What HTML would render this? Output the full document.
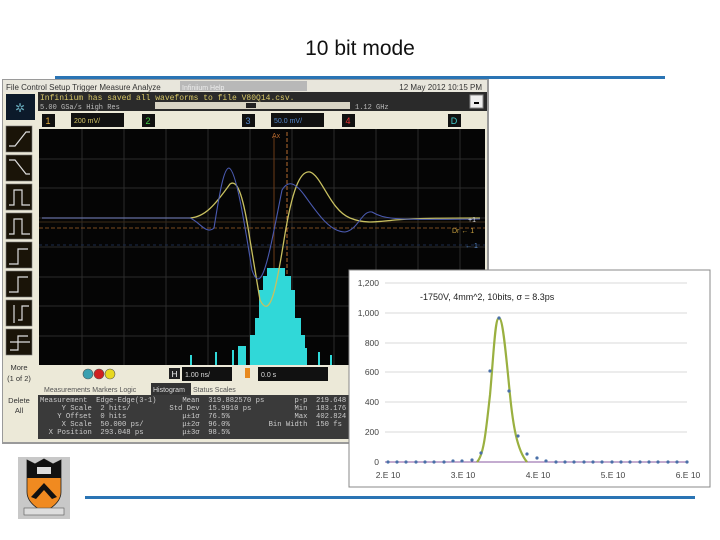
<!DOCTYPE html>
<html><head><meta charset="utf-8"><style>
html,body{margin:0;padding:0;background:#fff;width:720px;height:540px;overflow:hidden}
svg{display:block}
text{font-family:"Liberation Sans",sans-serif}
.m text, text.m{font-family:"Liberation Mono",monospace}
</style></head><body>
<svg width="720" height="540" viewBox="0 0 720 540" xmlns="http://www.w3.org/2000/svg">
<text x="360" y="55" font-size="21" text-anchor="middle" fill="#111">10 bit mode</text>
<rect x="55" y="76" width="610" height="3" fill="#2a74b4"/>
<rect x="85" y="496" width="610" height="3" fill="#2a74b4"/>

<rect x="2" y="79" width="487" height="365" fill="#9a9a9a"/>
<rect x="3" y="80" width="484" height="362" fill="#ece9d8"/>
<rect x="3" y="80" width="484" height="12" fill="#e8e6dc"/>
<text x="6" y="90" font-size="8" fill="#333">File  Control  Setup  Trigger  Measure  Analyze</text>
<rect x="180" y="81" width="127" height="10" fill="#b8b8b8"/>
<text x="182" y="90" font-size="7" fill="#eee">Infiniium Help</text>
<text x="482" y="90" font-size="8" fill="#333" text-anchor="end">12 May 2012 10:15 PM</text>
<rect x="38" y="92" width="449" height="19" fill="#2a2a2a"/>
<text x="40" y="100" class="m" font-size="8" fill="#d8c868">Infiniium has saved all waveforms to file V80Q14.csv.</text>
<text x="40" y="109" class="m" font-size="7" fill="#bbb">5.00 GSa/s  High Res</text>
<rect x="155" y="102" width="195" height="7" fill="#d8d4c4"/>
<rect x="246" y="103" width="10" height="5" fill="#222"/>
<text x="355" y="109" class="m" font-size="7" fill="#bbb">1.12 GHz</text>
<rect x="470" y="95" width="13" height="13" fill="#eee" stroke="#888"/>
<rect x="474" y="102" width="5" height="2" fill="#000"/>
<rect x="6" y="94" width="29" height="26" fill="#0c1a2a"/>
<text x="20" y="112" font-size="12" fill="#6ab" text-anchor="middle">✲</text>
<rect x="38" y="111" width="449" height="18" fill="#ece9d8"/>
<rect x="42" y="114" width="13" height="13" fill="#111"/><text x="48" y="124" font-size="9" fill="#e8b040" text-anchor="middle">1</text>
<rect x="71" y="113" width="53" height="14" fill="#111"/><text x="74" y="123" font-size="7" fill="#d8c868">200 mV/</text>
<rect x="142" y="114" width="13" height="13" fill="#111"/><text x="148" y="124" font-size="9" fill="#4c4" text-anchor="middle">2</text>
<rect x="242" y="114" width="13" height="13" fill="#111"/><text x="248" y="124" font-size="9" fill="#58c" text-anchor="middle">3</text>
<rect x="271" y="113" width="53" height="14" fill="#111"/><text x="274" y="123" font-size="7" fill="#58c">50.0 mV/</text>
<rect x="342" y="114" width="13" height="13" fill="#111"/><text x="348" y="124" font-size="9" fill="#e33" text-anchor="middle">4</text>
<rect x="448" y="114" width="13" height="13" fill="#111"/><text x="454" y="124" font-size="9" fill="#4cc" text-anchor="middle">D</text>
<g fill="#1a1408" stroke="#777" stroke-width="0.6">
<rect x="6" y="126" width="26" height="26"/><rect x="6" y="155" width="26" height="26"/>
<rect x="6" y="184" width="26" height="26"/><rect x="6" y="213" width="26" height="26"/>
<rect x="6" y="242" width="26" height="26"/><rect x="6" y="271" width="26" height="26"/>
<rect x="6" y="300" width="26" height="26"/><rect x="6" y="329" width="26" height="26"/>
</g>
<g fill="none" stroke="#ddd" stroke-width="1.2">
<path d="M9 146 L15 146 L26 132 L30 132"/><path d="M9 160 L15 160 L26 174 L30 174"/>
<path d="M9 205 L14 205 L14 190 L22 190 L22 205 L30 205"/><path d="M9 234 L14 234 L14 219 L22 219 L22 234 L30 234"/>
<path d="M9 264 L18 264 L18 249 L28 249"/><path d="M9 292 L18 292 L18 277 L28 277"/>
<path d="M14 305 L14 323 M18 320 L22 320 L22 306 L29 306"/><path d="M10 350 L18 350 L18 336 L28 336 M10 342 L30 342"/>
</g>
<text x="19" y="370" font-size="7.5" fill="#333" text-anchor="middle">More</text>
<text x="19" y="381" font-size="7.5" fill="#333" text-anchor="middle">(1 of 2)</text>
<text x="19" y="403" font-size="7.5" fill="#333" text-anchor="middle">Delete</text>
<text x="19" y="413" font-size="7.5" fill="#333" text-anchor="middle">All</text>
<rect x="39" y="129" width="446" height="236" fill="#050505"/>
<g stroke="#2c2c2c" stroke-width="1">
<path d="M82 129V365M124 129V365M166 129V365M208 129V365M250 129V365M292 129V365M334 129V365M376 129V365M418 129V365M460 129V365"/>
<path d="M39 159H485M39 188H485M39 218H485M39 247H485M39 277H485M39 306H485M39 336H485"/>
</g>
<path d="M39 228H485" stroke="#7a4a20" stroke-dasharray="4 2"/>
<path d="M39 222H485" stroke="#3a2a18"/>
<path d="M39 245H485" stroke="#1a2a4a" stroke-dasharray="3 3"/>
<path d="M287 132V365" stroke="#b56a30" stroke-dasharray="4 2"/>
<path d="M274 136V365" stroke="#6a3a18"/>
<text x="272" y="138" font-size="7" fill="#b56a30">Ax</text>
<g fill="#30d8d8">
<rect x="259" y="290" width="36" height="75"/><rect x="263" y="276" width="28" height="89"/>
<rect x="267" y="268" width="18" height="97"/><rect x="255" y="318" width="46" height="47"/>
<rect x="250" y="335" width="55" height="30"/><rect x="232" y="350" width="2" height="15"/>
<rect x="215" y="352" width="2" height="13"/><rect x="238" y="346" width="8" height="19"/>
<rect x="305" y="348" width="2" height="17"/><rect x="318" y="352" width="2" height="13"/>
<rect x="190" y="355" width="2" height="10"/><rect x="330" y="355" width="2" height="10"/>
</g>
<path d="M42 218 L190 218 C205 217 215 205 230 184 C238 178 244 200 250 240 L260 300 C270 320 276 290 284 240 C292 190 300 170 310 172 C322 176 330 210 350 218 C365 224 375 222 395 220 C420 218 450 218 480 218" fill="none" stroke="#c8c060" stroke-width="1.3"/>
<path d="M42 218 L190 218 C200 222 206 235 214 228 C220 190 224 168 229 168 C236 170 244 220 252 270 C262 300 270 250 282 190 C288 180 295 182 305 196 C318 214 330 232 345 232 C358 230 362 210 372 212 C385 220 400 220 480 219" fill="none" stroke="#4a5ab0" stroke-width="1.1"/>
<text x="468" y="222" font-size="7" fill="#ddd">+1</text>
<text x="452" y="233" font-size="7" fill="#c8a040">Dr ← 1</text>
<text x="465" y="248" font-size="7" fill="#58c">← 1</text>
<rect x="38" y="365" width="449" height="18" fill="#ece9d8"/>
<circle cx="88" cy="374" r="5" fill="#3aa0b0" stroke="#555" stroke-width=".6"/>
<circle cx="99" cy="374" r="5" fill="#d02020" stroke="#555" stroke-width=".6"/>
<circle cx="110" cy="374" r="5" fill="#e8d820" stroke="#555" stroke-width=".6"/>
<rect x="169" y="368" width="11" height="11" fill="#222"/><text x="174.5" y="377" font-size="8" fill="#fff" text-anchor="middle">H</text>
<rect x="182" y="367" width="50" height="14" fill="#111"/><text x="185" y="377" font-size="7" fill="#ddd">1.00 ns/</text>
<rect x="245" y="368" width="5" height="10" fill="#e88a20"/>
<rect x="258" y="367" width="70" height="14" fill="#111"/><text x="261" y="377" font-size="7" fill="#ddd">0.0 s</text>
<rect x="38" y="383" width="449" height="12" fill="#ece9d8"/>
<text x="44" y="392" font-size="7" fill="#555">Measurements  Markers  Logic</text>
<rect x="151" y="383" width="40" height="12" fill="#333"/><text x="153" y="392" font-size="7" fill="#ddd">Histogram</text>
<text x="193" y="392" font-size="7" fill="#555">Status  Scales</text>
<rect x="38" y="395" width="449" height="44" fill="#3a3a3a"/>
<g class="m" font-size="7.2" fill="#ccc">
<text x="40" y="402" xml:space="preserve">Measurement  Edge-Edge(3-1)      Mean  319.882570 ps       p-p  219.648 ps</text>
<text x="40" y="410" xml:space="preserve">     Y Scale  2 hits/         Std Dev  15.9910 ps          Min  183.176 ps</text>
<text x="40" y="418" xml:space="preserve">    Y Offset  0 hits             μ±1σ  76.5%               Max  402.824 ps</text>
<text x="40" y="426" xml:space="preserve">     X Scale  50.000 ps/         μ±2σ  96.0%         Bin Width  150 fs</text>
<text x="40" y="434" xml:space="preserve">  X Position  293.048 ps         μ±3σ  98.5%</text>
</g>

<rect x="349" y="270" width="361" height="217" fill="#fff" stroke="#888" stroke-width="1"/>
<g stroke="#d8d8d8" stroke-width="1">
<path d="M385 283H687M385 313H687M385 343H687M385 372H687M385 402H687M385 432H687"/>
</g>
<path d="M385 462H687" stroke="#8a5aa0" stroke-width="1"/>
<g font-size="8.5" fill="#444" text-anchor="end">
<text x="379" y="286">1,200</text><text x="379" y="316">1,000</text><text x="379" y="346">800</text>
<text x="379" y="375">600</text><text x="379" y="405">400</text><text x="379" y="435">200</text><text x="379" y="465">0</text>
</g>
<g font-size="8.5" fill="#444" text-anchor="middle">
<text x="388" y="478">2.E 10</text><text x="463" y="478">3.E 10</text><text x="538" y="478">4.E 10</text>
<text x="613" y="478">5.E 10</text><text x="688" y="478">6.E 10</text>
</g>
<text x="420" y="300" font-size="9" fill="#222">-1750V, 4mm^2, 10bits, σ = 8.3ps</text>
<path d="M477 462 C484 455 486 430 490 395 C494 350 495 318 499 318 C503 318 506 355 510 395 C513 425 517 450 527 462" fill="none" stroke="#9ab040" stroke-width="2.2"/>
<g fill="#4a70a8">
<circle cx="388" cy="462" r="1.6"/><circle cx="397" cy="462" r="1.6"/><circle cx="406" cy="462" r="1.6"/><circle cx="416" cy="462" r="1.6"/>
<circle cx="425" cy="462" r="1.6"/><circle cx="434" cy="462" r="1.6"/><circle cx="444" cy="462" r="1.6"/><circle cx="453" cy="461" r="1.6"/>
<circle cx="462" cy="461" r="1.6"/><circle cx="472" cy="460" r="1.6"/><circle cx="481" cy="453" r="1.6"/><circle cx="490" cy="371" r="1.6"/>
<circle cx="499" cy="318" r="1.6"/><circle cx="509" cy="391" r="1.6"/><circle cx="518" cy="436" r="1.6"/><circle cx="527" cy="454" r="1.6"/>
<circle cx="537" cy="458" r="1.6"/><circle cx="546" cy="461" r="1.6"/><circle cx="556" cy="462" r="1.6"/><circle cx="565" cy="462" r="1.6"/>
<circle cx="574" cy="462" r="1.6"/><circle cx="584" cy="462" r="1.6"/><circle cx="593" cy="462" r="1.6"/><circle cx="602" cy="462" r="1.6"/>
<circle cx="612" cy="462" r="1.6"/><circle cx="621" cy="462" r="1.6"/><circle cx="630" cy="462" r="1.6"/><circle cx="640" cy="462" r="1.6"/>
<circle cx="649" cy="462" r="1.6"/><circle cx="658" cy="462" r="1.6"/><circle cx="668" cy="462" r="1.6"/><circle cx="677" cy="462" r="1.6"/><circle cx="687" cy="462" r="1.6"/>
</g>

<rect x="18" y="457" width="52" height="62" fill="#c8c8c8"/>
<path d="M27 460 L35 464 L44 459 L53 464 L61 460 L61 492 C61 502 52 508 44 512 C36 508 27 502 27 492 Z" fill="#f08a20" stroke="#222" stroke-width="0.8"/>
<path d="M27 460 L35 464 L44 459 L53 464 L61 460 L61 478 L27 478 Z" fill="#111"/>
<rect x="37" y="467" width="14" height="7" fill="#ddd"/>
<path d="M31 497 L44 483 L57 497 L52 499 L44 490 L36 499 Z" fill="#111"/>
<rect x="24" y="508" width="40" height="7" fill="#ddd" stroke="#555" stroke-width="0.6"/>
</svg>
</body></html>
